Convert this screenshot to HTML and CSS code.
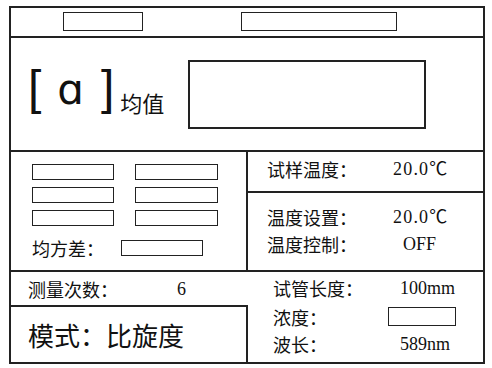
FILE: index.html
```html
<!doctype html>
<html lang="zh">
 <head>
  <meta charset="UTF-8">
  <title>旋光仪界面</title>
  <link rel="stylesheet" href="styles.css">
 </head>
 <body>

	<!-- 전체 화면 -->
	<div class="panel">

		<!-- 상단 바 -->
		<div class="row-top">
			<div class="box box-a"></div>
			<div class="box box-b"></div>
		</div>

		<!-- 평균값 -->
		<div class="row-avg">
			<div class="avg-label"><span class="brk">[</span><span class="alpha">ɑ</span><span class="brk">]</span><span class="avg-word">均值</span></div>
			<div class="box box-avg"></div>
		</div>

		<!-- 중간 영역 -->
		<div class="row-mid">
			<div class="mid-left">
				<div class="grid6">
					<div class="box cell"></div>
					<div class="box cell"></div>
					<div class="box cell"></div>
					<div class="box cell"></div>
					<div class="box cell"></div>
					<div class="box cell"></div>
				</div>
				<div class="sd">
					<span class="cn">均方差：</span>
					<div class="box box-sd"></div>
				</div>
			</div>
			<div class="mid-right">
				<div class="temp-now">
					<span class="cn lbl">试样温度：</span><span class="val temp">20.0℃</span>
				</div>
				<div class="temp-set">
					<div class="line"><span class="cn lbl">温度设置：</span><span class="val temp">20.0℃</span></div>
					<div class="line"><span class="cn lbl">温度控制：</span><span class="val off">OFF</span></div>
				</div>
			</div>
		</div>

		<!-- 하단 영역 -->
		<div class="row-bot">
			<div class="bot-left">
				<div class="count"><span class="cn lbl-c">测量次数：</span><span class="val">6</span></div>
				<div class="mode cn">模式：比旋度</div>
			</div>
			<div class="bot-right">
				<div class="line first"><span class="cn lbl2">试管长度：</span><span class="val">100mm</span></div>
				<div class="line"><span class="cn lbl2">浓度：</span><div class="box box-conc"></div></div>
				<div class="line"><span class="cn lbl2">波长：</span><span class="val">589nm</span></div>
			</div>
		</div>

	</div>

 </body>
</html>
```

FILE: styles.css
```css
/* 기본 */
body
{
	margin:0;
	background:#fff;
	color:#111;
	font-family:"Liberation Serif", "Noto Sans CJK SC", serif;
	font-size:18px;
	line-height:1;
}

.panel
{
	box-sizing:border-box;
	width:476px;
	height:358px;
	margin:6px 0 0 9px;
	border:2px solid #222;
	display:flex;
	flex-direction:column;
}

.box
{
	box-sizing:border-box;
	border:1.5px solid #222;
	background:#fff;
}

.cn
{
	font-family:"Noto Sans CJK SC", sans-serif;
	font-size:18px;
}

/* 온도 값은 글자 간격을 조금 넓힘 */
.val.temp
{
	letter-spacing:1.2px;
}

/* 상단 바 */
.row-top
{
	height:28px;
	border-bottom:2px solid #222;
	display:flex;
	align-items:flex-start;
	flex:none;
}

.box-a
{
	width:80px;
	height:19px;
	margin:4px 0 0 52px;
}

.box-b
{
	width:156px;
	height:19px;
	margin:4px 0 0 98px;
}

/* 평균값 */
.row-avg
{
	height:112px;
	border-bottom:2px solid #222;
	display:flex;
	align-items:flex-start;
	flex:none;
}

.avg-label
{
	padding:26px 0 0 17px;
	box-sizing:border-box;
	width:177px;
	white-space:nowrap;
}

.brk
{
	font-family:"Liberation Sans", sans-serif;
	font-size:48px;
}

.alpha
{
	font-family:"DejaVu Sans", sans-serif;
	font-size:42px;
	margin:0 17px 0 16px;
}

.avg-word
{
	font-family:"Noto Sans CJK SC", sans-serif;
	font-size:22px;
	margin-left:6px;
	vertical-align:-8px;
}

.box-avg
{
	width:238px;
	height:69px;
	margin-top:22px;
	border-width:2px;
}

/* 중간 영역 */
.row-mid
{
	height:118px;
	border-bottom:2px solid #222;
	display:flex;
	flex:none;
}

.mid-left
{
	border-right:2px solid #222;
	padding:12px 0 0 21px;
	box-sizing:border-box;
	width:237px;
}

.grid6
{
	display:grid;
	grid-template-columns:82px 83px;
	column-gap:21px;
	row-gap:7px;
}

.cell
{
	height:16px;
}

.sd
{
	display:flex;
	align-items:center;
	margin-top:13px;
}

.box-sd
{
	width:82px;
	height:16px;
	margin-left:17px;
}

.mid-right
{
	flex:1;
	display:flex;
	flex-direction:column;
}

.temp-now
{
	height:41px;
	border-bottom:2px solid #222;
	display:flex;
	align-items:center;
	padding:0 0 5px 19px;
	box-sizing:border-box;
}

.lbl
{
	width:126px;
}

.temp-set
{
	flex:1;
	padding:10px 0 0 19px;
}

.temp-set .line
{
	display:flex;
	height:27px;
	align-items:center;
}

.off
{
	margin-left:10px;
}

/* 하단 영역 */
.row-bot
{
	flex:1;
	display:flex;
}

.bot-left
{
	width:237px;
	display:flex;
	flex-direction:column;
}

.count
{
	height:33px;
	display:flex;
	align-items:center;
	padding-left:17px;
	padding-top:1px;
	box-sizing:border-box;
}

.lbl-c
{
	width:149px;
}

.mode
{
	flex:1;
	border-top:2px solid #222;
	border-right:2px solid #222;
	display:flex;
	align-items:center;
	padding:0 0 0 17px;
	font-size:26px;
}

.bot-right
{
	flex:1;
	padding:1px 0 0 25px;
}

.bot-right .line
{
	display:flex;
	align-items:center;
	height:27px;
}

.bot-right .line.first
{
	height:30px;
}

.lbl2
{
	width:127px;
}

.box-conc
{
	width:68px;
	height:19px;
	margin-left:-12px;
}
```
